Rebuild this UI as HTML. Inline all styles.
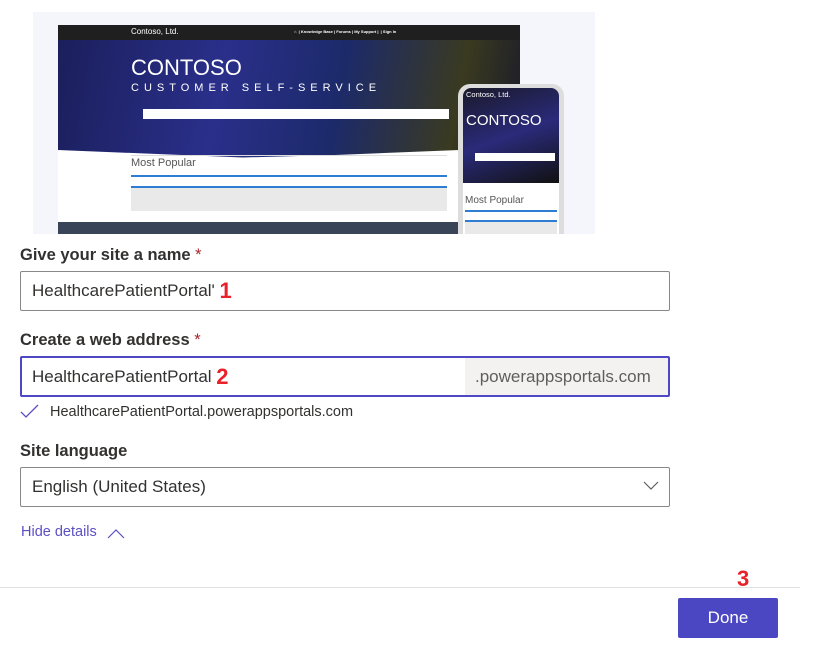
<!DOCTYPE html>
<html><head><style>
*{margin:0;padding:0;box-sizing:border-box}
body{width:813px;height:656px;background:#fff;position:relative;font-family:"Liberation Sans",sans-serif;color:#323130;overflow:hidden}
.a{position:absolute}
.lbl{font-size:16.5px;font-weight:600;color:#323130}
.lbl span{color:#a4262c;font-weight:400}
.inp{border:1px solid #8a8886;border-radius:2px;font-size:17px;padding-left:11px;display:flex;align-items:center;background:#fff}
.red{color:#e8212b;font-weight:700;font-size:22px}
</style></head><body>
<!-- preview -->
<div class="a" style="left:33px;top:12px;width:562px;height:222px;background:#f5f5fc"></div>
<div class="a" style="left:58px;top:25px;width:462px;height:209px;background:#fff;overflow:hidden">
  <div class="a" style="left:0;top:0;width:462px;height:15px;background:#1f1f1f"></div>
  <div class="a" style="left:73px;top:2px;color:#fff;font-size:8px">Contoso, Ltd.</div>
  <div class="a" style="left:236px;top:4px;color:#fff;font-size:4px;font-weight:700;white-space:nowrap">⌂ &nbsp;| Knowledge Base | Forums | My Support | &nbsp;| Sign In</div>
  <div class="a" style="left:0;top:15px;width:462px;height:125px;background:linear-gradient(100deg,#1b1f5c 0%,#2a2f8a 35%,#1c2a6a 60%,#3a3a20 85%,#1a1a2a 100%);clip-path:polygon(0 0,100% 0,100% 86%,60% 92%,40% 94%,0 88%)"></div>
  <div class="a" style="left:73px;top:30px;color:#fff;font-size:22px">CONTOSO</div>
  <div class="a" style="left:73px;top:57px;color:#fff;font-size:11px;letter-spacing:5px;white-space:nowrap">CUSTOMER SELF-SERVICE</div>
  <div class="a" style="left:85px;top:84px;width:306px;height:10px;background:#fff"></div>
  <div class="a" style="left:73px;top:130px;width:316px;height:1px;background:#ddd"></div>
  <div class="a" style="left:73px;top:132px;font-size:11px;color:#555">Most Popular</div>
  <div class="a" style="left:73px;top:150px;width:316px;height:2px;background:#2d7dd2"></div>
  <div class="a" style="left:73px;top:161px;width:316px;height:25px;background:#e9e9e9;border-top:2px solid #2d7dd2"></div>
  <div class="a" style="left:0;top:197px;width:462px;height:12px;background:#3a4458"></div>
</div>
<div class="a" style="left:458px;top:84px;width:106px;height:150px;background:#ddd;border-radius:12px 12px 0 0;padding:4px"></div>
<div class="a" style="left:463px;top:88px;width:96px;height:146px;background:#fff;overflow:hidden;border-radius:8px 8px 0 0">
  <div class="a" style="left:0;top:0;width:96px;height:95px;background:linear-gradient(160deg,#1a1a2a,#2a2a7a 50%,#111)"></div>
  <div class="a" style="left:3px;top:2px;color:#fff;font-size:7.5px">Contoso, Ltd.</div>
  <div class="a" style="left:3px;top:24px;color:#fff;font-size:15px">CONTOSO</div>
  <div class="a" style="left:12px;top:65px;width:80px;height:8px;background:#fff"></div>
  <div class="a" style="left:2px;top:107px;font-size:10px;color:#555">Most Popular</div>
  <div class="a" style="left:2px;top:122px;width:92px;height:2px;background:#2d7dd2"></div>
  <div class="a" style="left:2px;top:132px;width:92px;height:14px;background:#e9e9e9;border-top:2px solid #2d7dd2"></div>
</div>
<!-- form -->
<div class="a lbl" style="left:20px;top:246px">Give your site a name <span>*</span></div>
<div class="a inp" style="left:20px;top:271px;width:650px;height:40px">HealthcarePatientPortal'&nbsp;<span class="red">1</span></div>
<div class="a lbl" style="left:20px;top:331px">Create a web address <span>*</span></div>
<div class="a inp" style="left:20px;top:356px;width:650px;height:41px;border:2px solid #4f48c4;padding-left:10px">HealthcarePatientPortal&nbsp;<span class="red">2</span>
  <div class="a" style="right:0;top:0;width:203px;height:37px;background:#f3f2f1;color:#605e5c;font-size:17px;display:flex;align-items:center;padding-left:10px">.powerappsportals.com</div>
</div>
<svg class="a" style="left:20px;top:403px" width="20" height="16"><path d="M1 9 L6 14 L18 2" stroke="#5b4fc4" stroke-width="1.3" fill="none"/></svg>
<div class="a" style="left:50px;top:404px;font-size:14.5px;color:#323130">HealthcarePatientPortal.powerappsportals.com</div>
<div class="a lbl" style="left:20px;top:442px">Site language</div>
<div class="a inp" style="left:20px;top:467px;width:650px;height:40px">English (United States)
<svg class="a" style="right:10px;top:13px" width="16" height="10"><path d="M1 1 L8 8 L15 1" stroke="#605e5c" stroke-width="1.2" fill="none"/></svg></div>
<div class="a" style="left:21px;top:524px;font-size:14.5px;color:#5b4fc4">Hide details</div>
<svg class="a" style="left:107px;top:528px" width="18" height="12"><path d="M1 10 L9 2 L17 10" stroke="#5b4fc4" stroke-width="1.2" fill="none"/></svg>
<div class="a red" style="left:737px;top:566px">3</div>
<div class="a" style="left:0;top:587px;width:800px;height:1px;background:#e1dfdd"></div>
<div class="a" style="left:678px;top:598px;width:100px;height:40px;background:#4b46c1;border-radius:2px;color:#fff;font-size:17px;display:flex;align-items:center;justify-content:center">Done</div>
</body></html>
